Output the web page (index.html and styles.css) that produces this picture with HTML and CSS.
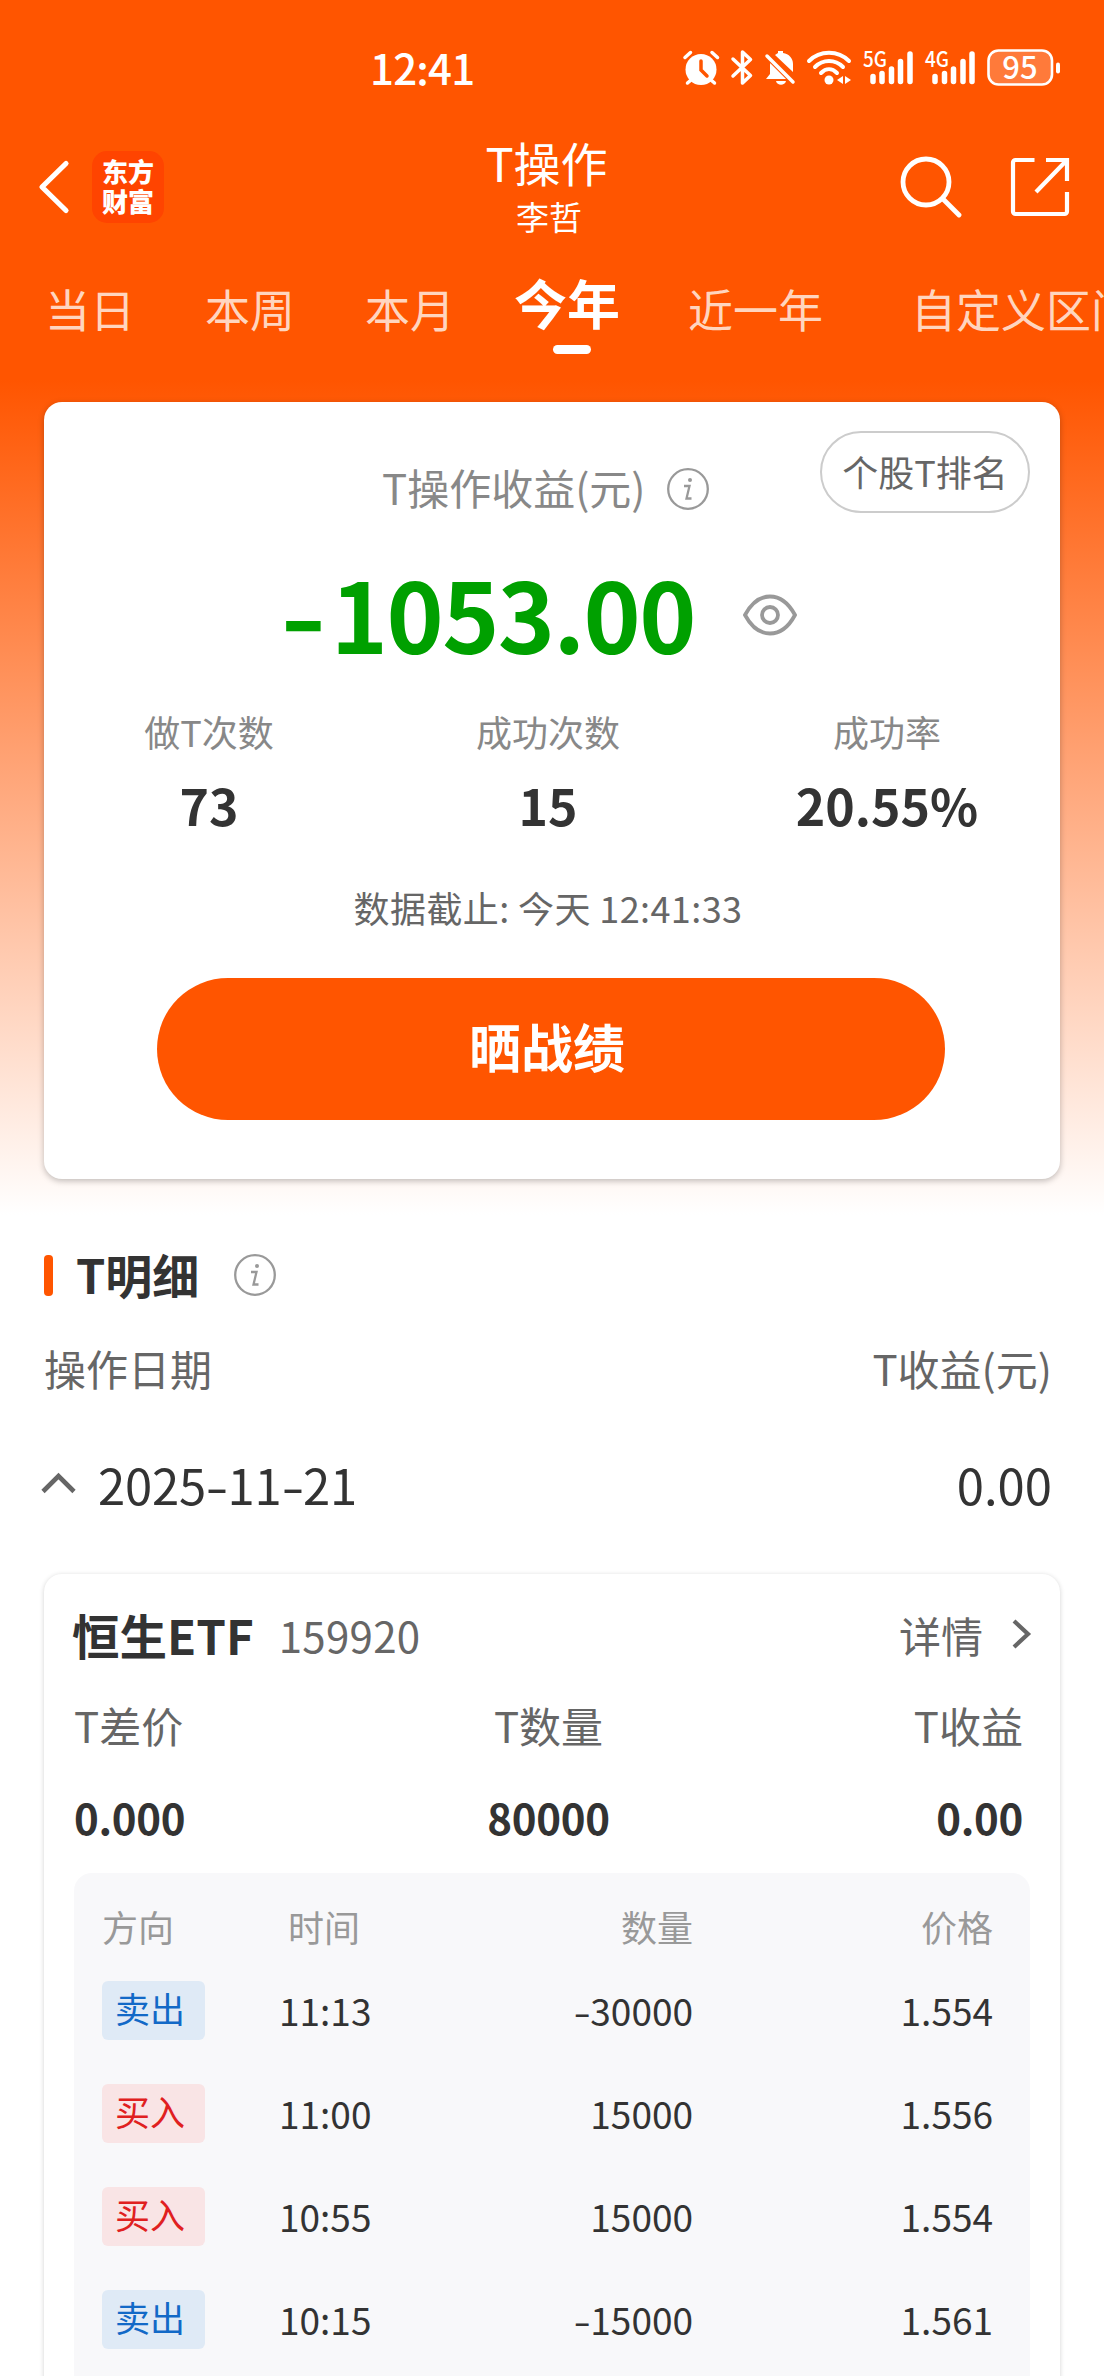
FILE: index.html
```html
<!DOCTYPE html>
<html lang="zh-CN">
<head>
<meta charset="utf-8">
<title>T操作</title>
<link rel="stylesheet" href="styles.css">
</head>
<body>
<div class="screen">
  <header class="status">
    <span class="clock">12:41</span>
    <svg class="status-icons" width="400" height="40" viewBox="0 0 400 40" fill="none" stroke="#fff" stroke-linecap="round">
      <g>
        <circle cx="19" cy="21.500" r="15.500" fill="#fff" stroke="none"/>
        <path d="M3 9.500l5.500-5M30 4.500l5.500 5M9 32l-3.500 3M29 32l3.500 3" stroke-width="3.500"/>
        <path d="M19 13v9l6 6" stroke="#ff5500" stroke-width="3.500"/>
      </g>
      <path d="M51 11l17.500 16.500-8 7.500V4l8 7.500L51 28" stroke-width="3.500" stroke-linejoin="round"/>
      <g>
        <path d="M84 31l4-5v-9c0-2 1-4 2-5l19 19zM93 7l3-2v-2h5v2c6 1 10 5 10 11v8zM94 33h10c-1 5-9 5-10 0z" fill="#fff" stroke="none"/>
        <path d="M85 7l26 26" stroke="#ff5500" stroke-width="7"/>
        <path d="M85 8l26 26" stroke-width="3.500"/>
      </g>
      <g stroke-width="4">
        <path d="M127 13c11-11 29-11 40 0M133 19c8-8 20-8 28 0M139 25c5-5 11-5 16 0"/>
        <circle cx="147" cy="32" r="4.500" fill="#fff" stroke="none"/>
        <path d="M161 28v8l-6-4zM163 28v8l6-4z" fill="#fff" stroke="none"/>
      </g>
      <path d="M191 28.500v5M200 25.500v8M209.500 21v12.500M218.500 13.500v20M228 6v27.500" stroke-width="5.500"/>
      <path d="M253 28.500v5M262.500 25.500v8M271.500 21v12.500M281 13.500v20M290 6v27.500" stroke-width="5.500"/>
      <text x="181" y="18.500" class="net" textLength="24" lengthAdjust="spacingAndGlyphs">5G</text>
      <text x="243" y="18.500" class="net" textLength="24" lengthAdjust="spacingAndGlyphs">4G</text>
      <rect x="306.500" y="2.500" width="63.500" height="34" rx="10" fill="#ff7a3a" stroke-width="2.600"/>
      <path d="M376 16.500v7" stroke-width="4"/>
      <text x="338" y="30.500" class="charge" text-anchor="middle">95</text>
    </svg>
  </header>

  <nav class="topbar">
    <div class="side">
      <svg width="32" height="56" viewBox="0 0 32 56"><path d="M28 4.500L4 28l24 23.500" fill="none" stroke="#fff" stroke-width="5.200" stroke-linecap="round" stroke-linejoin="round"/></svg>
      <div class="logo"><span>东方</span><span>财富</span></div>
    </div>
    <div class="heading"><h1>T操作</h1><p>李哲</p></div>
    <div class="side end">
      <svg width="62" height="62" viewBox="0 0 62 62" fill="none" stroke="#fff" stroke-width="4.800" stroke-linecap="round"><circle cx="26" cy="26" r="23"/><path d="M43 43l16 16"/></svg>
      <svg width="60" height="60" viewBox="0 0 60 60" fill="none" stroke="#fff" stroke-width="4.200"><path d="M24.500 3H5.500a2.500 2.500 0 0 0-2.500 2.500v49a2.500 2.500 0 0 0 2.500 2.500h49a2.500 2.500 0 0 0 2.500-2.500V35M36 3h21v21M56 4L26 35"/></svg>
    </div>
  </nav>

  <div class="tabs">
    <span>当日</span><span>本周</span><span>本月</span><span class="on">今年</span><span>近一年</span><span>自定义区间</span>
  </div>

  <section class="card summary">
    <div class="caption">
      <span>T操作收益(元)</span>
      <svg class="info" width="44" height="44" viewBox="0 0 44 44"><circle cx="22" cy="22" r="19.800" fill="none" stroke="#999" stroke-width="2.300"/><circle cx="24" cy="13" r="2" fill="#999"/><path d="M18 19h5.500l-3 12.500h5" fill="none" stroke="#999" stroke-width="2.300"/></svg>
      <button class="rank">个股T排名</button>
    </div>
    <div class="total">
      <strong><i class="dash">-</i>1053.00</strong>
      <svg width="56" height="44" viewBox="0 0 56 44" fill="none" stroke="#999" stroke-width="3.800"><path d="M3 22C10 9 18 3.500 28 3.500S46 9 53 22C46 35 38 40.500 28 40.500S10 35 3 22z"/><circle cx="28" cy="22" r="8"/></svg>
    </div>
    <div class="stats">
      <div><span>做T次数</span><b>73</b></div>
      <div><span>成功次数</span><b>15</b></div>
      <div><span>成功率</span><b>20.55%</b></div>
    </div>
    <p class="asof">数据截止: 今天 12:41:33</p>
    <button class="share">晒战绩</button>
  </section>

  <section class="detail">
    <h2><i class="mark"></i><span>T明细</span>
      <svg class="info" width="44" height="44" viewBox="0 0 44 44"><circle cx="22" cy="22" r="19.800" fill="none" stroke="#999" stroke-width="2.300"/><circle cx="24" cy="13" r="2" fill="#999"/><path d="M18 19h5.500l-3 12.500h5" fill="none" stroke="#999" stroke-width="2.300"/></svg>
    </h2>
    <div class="line labels"><span>操作日期</span><span>T收益(元)</span></div>
    <div class="line day">
      <span class="date"><svg width="36" height="24" viewBox="0 0 36 24"><path d="M2 20.500L17.500 5 33 20.500" fill="none" stroke="#666" stroke-width="4.600"/></svg><span>2025<i class="dash">-</i>11<i class="dash">-</i>21</span></span>
      <span>0.00</span>
    </div>
  </section>

  <section class="card stock">
    <div class="name">
      <b>恒生ETF</b><span class="code">159920</span><span class="more">详情</span>
      <svg width="24" height="34" viewBox="0 0 24 34"><path d="M5 4l14 13L5 30" fill="none" stroke="#666" stroke-width="4.200"/></svg>
    </div>
    <div class="trio heads"><span>T差价</span><span>T数量</span><span>T收益</span></div>
    <div class="trio values"><span>0.000</span><span>80000</span><span>0.00</span></div>
    <div class="trades">
      <div class="row head"><span>方向</span><span class="time">时间</span><span class="num">数量</span><span class="num">价格</span></div>
      <div class="row"><em class="sell">卖出</em><span>11:13</span><span class="num"><i class="dash">-</i>30000</span><span class="num">1.554</span></div>
      <div class="row"><em class="buy">买入</em><span>11:00</span><span class="num">15000</span><span class="num">1.556</span></div>
      <div class="row"><em class="buy">买入</em><span>10:55</span><span class="num">15000</span><span class="num">1.554</span></div>
      <div class="row"><em class="sell">卖出</em><span>10:15</span><span class="num"><i class="dash">-</i>15000</span><span class="num">1.561</span></div>
    </div>
  </section>
</div>
</body>
</html>
```
FILE: styles.css
```css
* { box-sizing: border-box; }
body, h1, h2, p { margin: 0; font-weight: 400; }
body { font-family: "Noto Sans CJK SC", sans-serif; color: #333; background: #fff; }
button { font-family: inherit; padding: 0; }
svg { display: block; flex: none; }
i, em { font-style: normal; }
.screen {
  width: 1104px;
  height: 2376px;
  overflow: hidden;
  background: linear-gradient(#ff5500 380px, #fff 1215px);
}
.dash { display: inline-block; width: .44em; text-align: center; transform: scaleX(1.35); }

.status { display: flex; align-items: center; height: 136px; padding-left: 370px; color: #fff; }
.clock { width: 312px; padding-bottom: 4px; font-size: 42px; font-weight: 500; letter-spacing: -.8px; }
.net { font: 500 21px "Noto Sans CJK SC", sans-serif; fill: #fff; stroke: none; }
.charge { font: 500 31px "Noto Sans CJK SC", sans-serif; fill: #fff; stroke: none; }

.topbar { display: flex; justify-content: space-between; align-items: center; height: 102px; padding: 0 34px 0 38px; color: #fff; }
.side { display: flex; align-items: center; gap: 22px; width: 220px; }
.end { justify-content: flex-end; gap: 48px; }
.logo {
  display: flex; flex-direction: column; justify-content: center; align-items: center;
  width: 72px; height: 72px; padding-bottom: 2px; border-radius: 15px; background: #ff4400;
  font-size: 26px; font-weight: 900; line-height: 30px;
}
.heading { text-align: center; padding-right: 10px; }
.heading h1 { margin-left: -5px; font-size: 47px; line-height: 56px; }
.heading p { padding-top: 2px; font-size: 33px; line-height: 48px; }

.tabs { display: flex; align-items: center; height: 164px; padding: 0 0 23px 45px; color: #ffd5bf; font-size: 45px; line-height: 60px; white-space: nowrap; }
.tabs span { margin-right: 70px; flex: none; }
.tabs .on { position: relative; margin: -13px 68px 0 -11px; color: #fff; font-size: 53px; font-weight: 700; }
.tabs span:nth-child(5) { margin-right: 88px; }
.on::after { content: ""; position: absolute; left: 50%; margin-left: -14px; bottom: -22px; width: 38px; height: 9px; border-radius: 5px; background: #fff; }

.card { width: 1016px; margin: 0 auto; border-radius: 18px; background: #fff; box-shadow: 0 2px 6px rgba(0, 0, 0, .25); }
.summary { height: 777px; padding-right: 8px; }
.caption { position: relative; display: flex; align-items: center; gap: 20px; height: 174px; padding-left: 338px; color: #888; font-size: 42px; }
.caption span { padding-bottom: 5px; }
.rank { position: absolute; top: 29px; right: 22px; width: 210px; height: 82px; padding-bottom: 3px; border: 2px solid #ccc; border-radius: 41px; background: #fff; color: #666; font-size: 36px; }
.total { display: flex; align-items: center; gap: 47px; height: 78px; padding-left: 237px; }
.total strong { padding-bottom: 6px; font-size: 97px; line-height: 80px; letter-spacing: -1.5px; color: #00a000; }
.total .dash { margin-right: 7px; transform: scaleX(1.3); }
.stats { display: grid; grid-template-columns: repeat(3, 339px); height: 218px; padding-top: 49px; justify-content: center; text-align: center; }
.stats span { display: block; font-size: 36px; line-height: 56px; color: #888; }
.stats b { display: block; font-size: 50px; line-height: 90px; }
.asof { height: 106px; font-size: 36px; line-height: 71px; letter-spacing: .4px; color: #666; text-align: center; }
.share { display: block; width: 788px; height: 142px; margin-left: 113px; padding: 0 8px 7px 0; border: 0; border-radius: 71px; background: #ff5500; color: #fff; font-size: 52px; font-weight: 700; }

.detail { padding: 61px 52px 0 44px; }
.detail h2 { display: flex; align-items: center; height: 70px; font-size: 47px; font-weight: 700; }
.detail h2 span { padding-bottom: 3px; }
.mark { width: 9px; height: 41px; margin-right: 23px; border-radius: 4px; background: #ff5500; }
.detail h2 svg { margin-left: 34px; }
.line { display: flex; justify-content: space-between; align-items: center; }
.labels { height: 114px; font-size: 42px; color: #666; }
.day { height: 118px; font-size: 49px; }
.date { display: flex; align-items: center; gap: 21px; margin-left: -3px; letter-spacing: -.2px; }

.stock { height: 900px; margin-top: 32px; padding: 16px 30px 0; box-shadow: 0 1px 5px rgba(0, 0, 0, .18); }
.name { display: flex; align-items: center; height: 88px; margin-right: -3px; }
.name b { margin-left: -2px; font-size: 47.500px; }
.code { margin-left: 25px; font-size: 42px; letter-spacing: .3px; color: #666; }
.more { margin: 0 26px 0 auto; font-size: 42px; color: #666; }
.trio { display: grid; grid-template-columns: 1fr 1fr 1fr; height: 92px; padding-right: 7px; align-items: center; text-align: center; }
.trio span:first-child { text-align: left; }
.trio span:last-child { text-align: right; }
.heads { font-size: 42px; color: #666; }
.values { font-size: 42px; font-weight: 700; letter-spacing: -.3px; }
.trades { margin-top: 11px; padding: 22px 36px 0 28px; border-radius: 18px; background: #f8f8fa; height: 700px; }
.row { display: grid; grid-template-columns: 177px 200px 214px 300px; align-items: center; height: 103px; font-size: 37px; }
.row span { padding-bottom: 2px; }
.head { height: 64px; font-size: 36px; color: #999; }
.time { padding-left: 9px; }
.num { text-align: right; }
.row em { width: 103px; height: 59px; padding-right: 7px; border-radius: 6px; font-size: 35px; line-height: 54px; text-align: center; }
.sell { color: #1269c7; background: #dfeaf6; }
.buy { color: #e02020; background: #f9e4e5; }
```
